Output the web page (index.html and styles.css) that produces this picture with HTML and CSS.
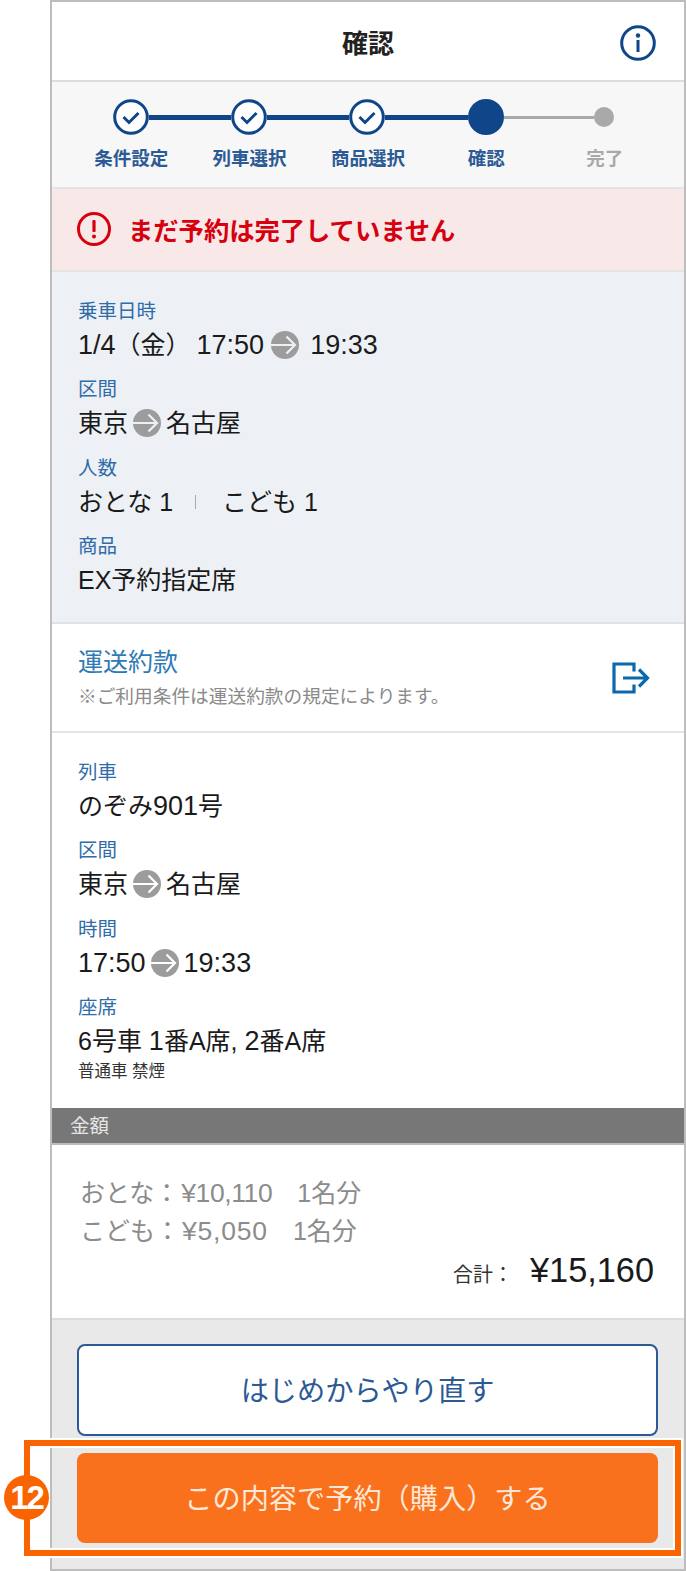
FILE: index.html
```html
<!DOCTYPE html>
<html lang="ja">
<head>
    <meta charset="UTF-8">
    <meta name="viewport" content="width=device-width, initial-scale=1.0">
    <title>確認</title>
    <link rel="stylesheet" href="styles.css">
</head>
<body>
    <div class="phone">
        <header class="top-bar">
            <h1>確認</h1>
            <svg class="info-icon" viewBox="0 0 36 36"><circle cx="18" cy="18" r="16.3" fill="none" stroke="#0f4689" stroke-width="3"/><circle cx="18" cy="10.5" r="2.2" fill="#0f4689"/><rect x="16.500" y="15" width="3" height="12" fill="#0f4689"/></svg>
        </header>

        <div class="steps">
            <div class="rail">
                <svg class="step-done" viewBox="0 0 36 36"><circle cx="18" cy="18" r="16.3" fill="#fff" stroke="#0f4689" stroke-width="3"/><path d="M10.500 18l5.500 5.500 9.500-9.500" fill="none" stroke="#0f4689" stroke-width="3"/></svg>
                <span class="line"></span>
                <svg class="step-done" viewBox="0 0 36 36"><circle cx="18" cy="18" r="16.3" fill="#fff" stroke="#0f4689" stroke-width="3"/><path d="M10.500 18l5.500 5.500 9.500-9.500" fill="none" stroke="#0f4689" stroke-width="3"/></svg>
                <span class="line"></span>
                <svg class="step-done" viewBox="0 0 36 36"><circle cx="18" cy="18" r="16.3" fill="#fff" stroke="#0f4689" stroke-width="3"/><path d="M10.500 18l5.500 5.500 9.500-9.500" fill="none" stroke="#0f4689" stroke-width="3"/></svg>
                <span class="line line-wide"></span>
                <span class="step-now"></span>
                <span class="line line-off"></span>
                <span class="step-off"></span>
            </div>
            <ul class="step-labels">
                <li>条件設定</li>
                <li>列車選択</li>
                <li>商品選択</li>
                <li>確認</li>
                <li class="off">完了</li>
            </ul>
        </div>

        <div class="alert">
            <svg class="alert-icon" viewBox="0 0 34 34"><circle cx="17" cy="17" r="15.5" fill="none" stroke="#d6000f" stroke-width="3"/><rect x="15.400" y="8" width="3.2" height="12" rx="1" fill="#d6000f"/><circle cx="17" cy="24.5" r="2" fill="#d6000f"/></svg>
            <p>まだ予約は完了していません</p>
        </div>

        <section class="summary">
            <dl>
                <dt>乗車日時</dt>
                <dd><span class="num">1/4</span>（金）<span class="num start-time">17:50</span><svg class="arrow arrow-wide" viewBox="0 0 28 28"><circle cx="14" cy="14" r="14" fill="#9c9c9c"/><path d="M0 14H24M15.500 5.500L24 14l-8.500 8.500" fill="none" stroke="#edf1f6" stroke-width="2.2"/></svg><span class="num">19:33</span></dd>
                <dt>区間</dt>
                <dd>東京<svg class="arrow" viewBox="0 0 28 28"><circle cx="14" cy="14" r="14" fill="#9c9c9c"/><path d="M0 14H24M15.500 5.500L24 14l-8.500 8.500" fill="none" stroke="#edf1f6" stroke-width="2.2"/></svg>名古屋</dd>
                <dt>人数</dt>
                <dd>おとな 1<span class="sep"></span>こども 1</dd>
                <dt>商品</dt>
                <dd>EX予約指定席</dd>
            </dl>
        </section>

        <section class="terms">
            <div>
                <a class="terms-link">運送約款</a>
                <p class="terms-note">※ご利用条件は運送約款の規定によります。</p>
            </div>
            <svg class="exit-icon" viewBox="0 0 38 32"><path d="M22 9.500V2H2v28h20v-7.500M11 16h24M27 7.500l8.500 8.500-8.500 8.500" fill="none" stroke="#0a68ad" stroke-width="3.2"/></svg>
        </section>

        <section class="details">
            <dl>
                <dt>列車</dt>
                <dd>のぞみ<span class="num">901</span>号</dd>
                <dt>区間</dt>
                <dd>東京<svg class="arrow" viewBox="0 0 28 28"><circle cx="14" cy="14" r="14" fill="#9c9c9c"/><path d="M0 14H24M15.500 5.500L24 14l-8.500 8.500" fill="none" stroke="#fff" stroke-width="2.2"/></svg>名古屋</dd>
                <dt>時間</dt>
                <dd><span class="num">17:50</span><svg class="arrow" viewBox="0 0 28 28"><circle cx="14" cy="14" r="14" fill="#9c9c9c"/><path d="M0 14H24M15.500 5.500L24 14l-8.500 8.500" fill="none" stroke="#fff" stroke-width="2.2"/></svg><span class="num">19:33</span></dd>
                <dt>座席</dt>
                <dd>6号車&nbsp;<span class="num">1</span>番A席,&nbsp;<span class="num">2</span>番A席</dd>
            </dl>
            <p class="seat-type">普通車 禁煙</p>
        </section>

        <h2 class="price-head">金額</h2>
        <section class="prices">
            <p><span class="price-who">おとな：</span><span class="amount-tight">¥10,110</span><span class="price-count">1名分</span></p>
            <p><span class="price-who">こども：</span><span class="amount-loose">¥5,050</span><span class="price-count">1名分</span></p>
            <div class="total"><span class="total-label">合計：</span><span class="total-num">¥15,160</span></div>
        </section>

        <div class="actions">
            <a class="btn btn-back">はじめからやり直す</a>
            <a class="btn btn-buy">この内容で予約（購入）する</a>
        </div>
    </div>

    <div class="callout"></div>
    <div class="badge">12</div>
</body>
</html>
```

FILE: styles.css
```css
* {
    box-sizing: border-box;
}
html, body {
    height: 100%;
}
body {
    margin: 0;
    background: #fff;
    font-family: "Liberation Sans", "Noto Sans CJK JP", sans-serif;
    color: #1a1a1a;
    overflow: hidden;
}
h1, h2, p, dl, dd, ul {
    margin: 0;
    padding: 0;
}
.phone {
    width: 636px;
    height: 1571px;
    margin-left: 50px;
    border: 2px solid #bdbdbd;
    display: flex;
    flex-direction: column;
}
.top-bar {
    height: 80px;
    flex: none;
    display: flex;
    align-items: center;
    justify-content: center;
    padding-top: 5px;
    position: relative;
    border-bottom: 2px solid #dcdcdc;
}
.top-bar h1 {
    font-size: 26px;
    line-height: 1;
    color: #222;
}
.info-icon {
    position: absolute;
    right: 28px;
    top: 23px;
    width: 36px;
    height: 36px;
}
.steps {
    height: 107px;
    flex: none;
    background: #f7f7f7;
    border-bottom: 2px solid #e4e4e4;
    padding-top: 17px;
}
.rail {
    display: flex;
    align-items: center;
    height: 36px;
    padding-left: 61px;
}
.step-done {
    width: 36px;
    height: 36px;
    flex: none;
}
.line {
    width: 82px;
    height: 5px;
    background: #0f4689;
    flex: none;
}
.line-wide {
    width: 83px;
}
.line-off {
    width: 90px;
    height: 3px;
    background: #a9a9a9;
}
.step-now {
    width: 36px;
    height: 36px;
    border-radius: 50%;
    background: #0f4689;
    flex: none;
}
.step-off {
    width: 20px;
    height: 20px;
    border-radius: 50%;
    background: #a9a9a9;
    flex: none;
}
.step-labels {
    list-style: none;
    display: grid;
    grid-template-columns: repeat(5, 118.4px);
    padding-left: 20px;
    margin-top: 12px;
}
.step-labels li {
    text-align: center;
    font-size: 18.5px;
    line-height: 24px;
    font-weight: bold;
    color: #2b5a94;
}
.step-labels li.off {
    color: #a9a9a9;
}
.alert {
    height: 83px;
    flex: none;
    background: #f8e8e8;
    border-bottom: 2px solid #e4e4e4;
    display: flex;
    align-items: center;
    padding: 0 0 2px 25px;
    gap: 17px;
}
.alert-icon {
    width: 34px;
    height: 34px;
}
.alert p {
    font-size: 25.3px;
    font-weight: bold;
    color: #d6000f;
}
dt {
    font-size: 19.5px;
    line-height: 31px;
    color: #2f6ca8;
}
dd {
    font-size: 25px;
    line-height: 36px;
    margin-bottom: 11.3px;
    display: flex;
    align-items: center;
    color: #1a1a1a;
}
.num {
    font-size: 27px;
}
.start-time {
    margin-left: 6px;
}
.summary {
    height: 352px;
    flex: none;
    background: #edf1f6;
    border-bottom: 2px solid #dfe3e8;
    padding: 24px 26px 0;
}
.arrow {
    width: 28px;
    height: 28px;
    margin: 0 5px;
    flex: none;
}
.arrow-wide {
    margin: 0 11px 0 7px;
}
.sep {
    width: 1px;
    height: 14px;
    background: #aaa;
    margin: 0 26px 0 22px;
}
.terms {
    height: 109px;
    flex: none;
    display: flex;
    align-items: center;
    justify-content: space-between;
    padding: 0 34px 0 26px;
    border-bottom: 2px solid #e4e4e4;
}
.terms-link {
    display: block;
    font-size: 25px;
    line-height: 34px;
    color: #2f7ab5;
}
.terms-note {
    font-size: 18.7px;
    line-height: 28px;
    margin-top: 4px;
    color: #8a8a8a;
}
.exit-icon {
    width: 38px;
    height: 32px;
}
.details {
    height: 375px;
    flex: none;
    padding: 24px 26px 0;
}
.details dd:last-child {
    margin-bottom: 0;
}
.seat-type {
    font-size: 16.5px;
    line-height: 22px;
    margin-top: 1px;
    color: #333;
}
.price-head {
    height: 37px;
    flex: none;
    background: #777;
    border-bottom: 2px solid #bbb;
    color: #e6e6e6;
    font-size: 19.5px;
    font-weight: normal;
    line-height: 37px;
    padding-left: 18px;
}
.prices {
    height: 175px;
    flex: none;
    padding: 29px 28px 0;
    border-bottom: 2px solid #dcdcdc;
    font-size: 26.5px;
    line-height: 38px;
    color: #8c8c8c;
}
.price-who {
    font-size: 25px;
    margin-right: 2px;
}
.amount-tight {
    letter-spacing: -0.4px;
}
.amount-loose {
    letter-spacing: 0.8px;
}
.price-count {
    font-size: 25px;
    margin-left: 25px;
}
.total {
    display: flex;
    justify-content: flex-end;
    align-items: baseline;
    margin-top: 1px;
    padding-right: 2px;
    color: #1a1a1a;
}
.total-label {
    font-size: 20px;
    margin-right: 17px;
    color: #333;
}
.total-num {
    font-size: 34.3px;
}
.actions {
    flex: 1;
    background: #e9e9e9;
    padding: 24px 26px 0 25px;
    display: flex;
    flex-direction: column;
    gap: 17px;
}
.btn {
    flex: none;
    height: 90px;
    padding-bottom: 4px;
    border-radius: 8px;
    display: flex;
    align-items: center;
    justify-content: center;
    font-size: 28.2px;
}
.btn-back {
    height: 92px;
    background: #fff;
    border: 2px solid #2b5a94;
    color: #2b5a94;
}
.btn-buy {
    background: #f9711d;
    color: #ffe8d8;
}
.callout {
    position: absolute;
    left: 24px;
    top: 1440px;
    width: 657px;
    height: 116px;
    border: 6px solid #fa6400;
    outline: 2px solid #fff;
    box-shadow: inset 0 0 0 2px #fff;
}
.badge {
    position: absolute;
    left: 4px;
    top: 1475px;
    width: 45px;
    height: 45px;
    border-radius: 50%;
    background: #fa6400;
    color: #fff;
    font-size: 33px;
    font-weight: bold;
    letter-spacing: -2px;
    line-height: 45px;
    text-align: center;
}
```
